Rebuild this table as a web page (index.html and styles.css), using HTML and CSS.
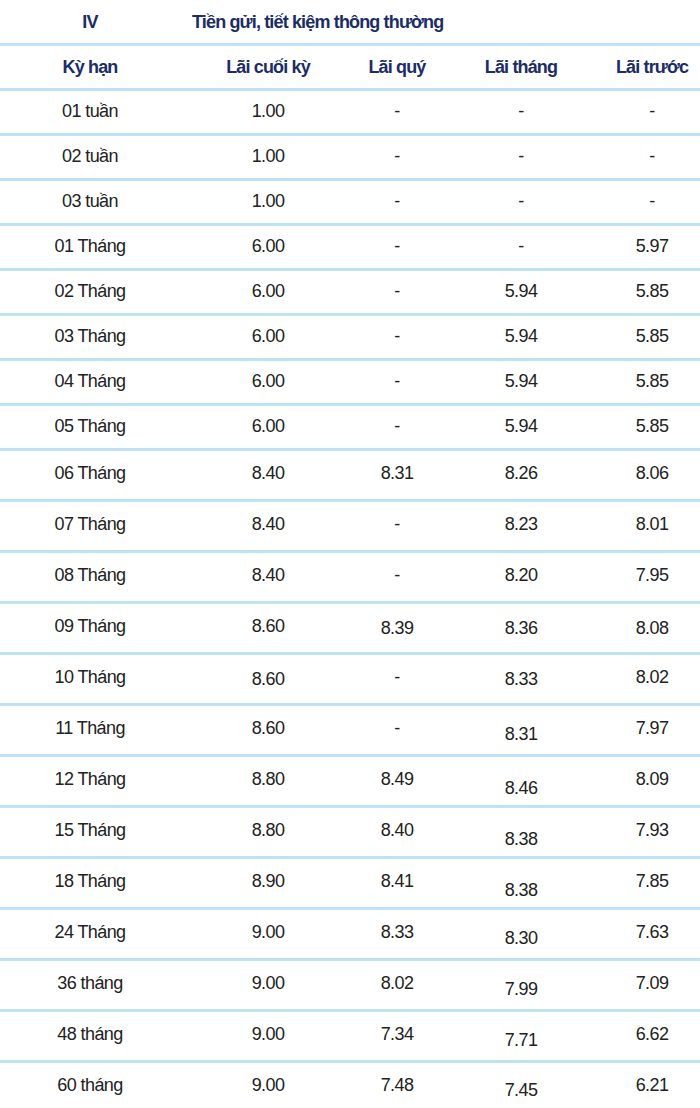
FILE: index.html
```
<!DOCTYPE html>
<html lang="vi">
<head>
<meta charset="utf-8">
<link rel="stylesheet" href="styles.css">
</head>
<body>
<div class="rates">
  <div class="row head h1">
    <div class="c">IV</div>
    <div class="title">Tiền gửi, tiết kiệm thông thường</div>
  </div>
  <div class="row head h2">
    <div class="c">Kỳ hạn</div><div class="c">Lãi cuối kỳ</div><div class="c">Lãi quý</div><div class="c">Lãi tháng</div><div class="c">Lãi trước</div>
  </div>
  <div class="row s"><div class="c">01 tuần</div><div class="c">1.00</div><div class="c">-</div><div class="c">-</div><div class="c">-</div></div>
  <div class="row s"><div class="c">02 tuần</div><div class="c">1.00</div><div class="c">-</div><div class="c">-</div><div class="c">-</div></div>
  <div class="row s"><div class="c">03 tuần</div><div class="c">1.00</div><div class="c">-</div><div class="c">-</div><div class="c">-</div></div>
  <div class="row s"><div class="c">01 Tháng</div><div class="c">6.00</div><div class="c">-</div><div class="c">-</div><div class="c">5.97</div></div>
  <div class="row s"><div class="c">02 Tháng</div><div class="c">6.00</div><div class="c">-</div><div class="c">5.94</div><div class="c">5.85</div></div>
  <div class="row s"><div class="c">03 Tháng</div><div class="c">6.00</div><div class="c">-</div><div class="c">5.94</div><div class="c">5.85</div></div>
  <div class="row s"><div class="c">04 Tháng</div><div class="c">6.00</div><div class="c">-</div><div class="c">5.94</div><div class="c">5.85</div></div>
  <div class="row s"><div class="c">05 Tháng</div><div class="c">6.00</div><div class="c">-</div><div class="c">5.94</div><div class="c">5.85</div></div>
  <div class="row t"><div class="c">06 Tháng</div><div class="c">8.40</div><div class="c">8.31</div><div class="c">8.26</div><div class="c">8.06</div></div>
  <div class="row t"><div class="c">07 Tháng</div><div class="c">8.40</div><div class="c">-</div><div class="c">8.23</div><div class="c">8.01</div></div>
  <div class="row t"><div class="c">08 Tháng</div><div class="c">8.40</div><div class="c">-</div><div class="c">8.20</div><div class="c">7.95</div></div>
  <div class="row t"><div class="c">09 Tháng</div><div class="c">8.60</div><div class="c d1">8.39</div><div class="c d1">8.36</div><div class="c d1">8.08</div></div>
  <div class="row t"><div class="c">10 Tháng</div><div class="c d1">8.60</div><div class="c">-</div><div class="c d1">8.33</div><div class="c">8.02</div></div>
  <div class="row t"><div class="c">11 Tháng</div><div class="c">8.60</div><div class="c">-</div><div class="c d2">8.31</div><div class="c">7.97</div></div>
  <div class="row t"><div class="c">12 Tháng</div><div class="c">8.80</div><div class="c">8.49</div><div class="c d3">8.46</div><div class="c">8.09</div></div>
  <div class="row t"><div class="c">15 Tháng</div><div class="c">8.80</div><div class="c">8.40</div><div class="c d3">8.38</div><div class="c">7.93</div></div>
  <div class="row t"><div class="c">18 Tháng</div><div class="c">8.90</div><div class="c">8.41</div><div class="c d3">8.38</div><div class="c">7.85</div></div>
  <div class="row t"><div class="c">24 Tháng</div><div class="c">9.00</div><div class="c">8.33</div><div class="c d2">8.30</div><div class="c">7.63</div></div>
  <div class="row t"><div class="c">36 tháng</div><div class="c">9.00</div><div class="c">8.02</div><div class="c d2">7.99</div><div class="c">7.09</div></div>
  <div class="row t"><div class="c">48 tháng</div><div class="c">9.00</div><div class="c">7.34</div><div class="c d2">7.71</div><div class="c">6.62</div></div>
  <div class="row last"><div class="c">60 tháng</div><div class="c">9.00</div><div class="c">7.48</div><div class="c d2">7.45</div><div class="c">6.21</div></div>
</div>
</body>
</html>
```
FILE: styles.css
```
html, body {
  margin: 0;
  padding: 0;
  background: #ffffff;
}
body {
  font-family: "Liberation Sans", Arial, sans-serif;
  color: #222222;
  font-size: 18px;
  letter-spacing: -0.6px;
}
.rates {
  width: 700px;
  overflow: hidden;
}
.row {
  display: grid;
  grid-template-columns: 180px 176px 82px 166px 96px;
  box-sizing: border-box;
  border-bottom: 3px solid transparent;
  border-image: linear-gradient(to bottom, #b3def3 0%, #4aafe0 35%, #4aafe0 70%, #c2e4f5 100%) 1;
}
.c {
  display: flex;
  align-items: center;
  justify-content: center;
  white-space: nowrap;
}
.head {
  font-weight: bold;
  color: #1c2c66;
  letter-spacing: -0.85px;
}
.h1 { height: 46px; }
.h2 { height: 45px; }
.h1 .c { padding-top: 2px; }
.title {
  grid-column: 2 / 6;
  display: flex;
  align-items: center;
  padding-left: 12px;
  padding-top: 2px;
  white-space: nowrap;
}
.s { height: 45px; }
.s .c { padding-bottom: 2px; }
.t { height: 51px; }
.t .c { padding-bottom: 4px; }
.last {
  height: 60px;
  border-bottom: none;
  border-image: none;
}
.last .c { padding-bottom: 16px; }
.c.d1 { padding-top: 4px; padding-bottom: 4px; }
.c.d2 { padding-top: 8px; padding-bottom: 0; }
.c.d3 { padding-top: 14px; padding-bottom: 0; }
.last .c.d2 { padding-top: 0; padding-bottom: 6px; }
```
